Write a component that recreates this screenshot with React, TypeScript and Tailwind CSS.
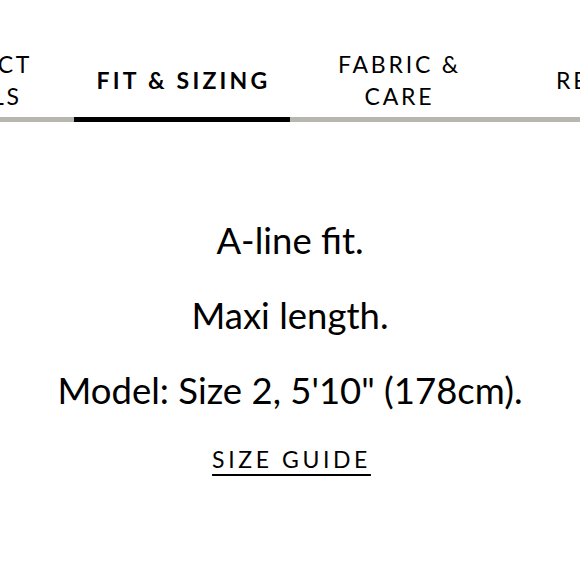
const tabs = [
  { label: 'PRODUCT DETAILS', lines: ['PRODUCT', 'DETAILS'] },
  { label: 'FIT & SIZING', lines: ['FIT & SIZING'], active: true },
  { label: 'FABRIC & CARE', lines: ['FABRIC &', 'CARE'] },
  { label: 'REVIEWS', lines: ['REVIEWS'] },
];

const details = ['A-line fit.', 'Maxi length.', 'Model: Size 2, 5\'10" (178cm).'];

export default function App() {
  return (
    <div
      className="w-[580px] h-[580px] overflow-hidden bg-white text-black"
      style={{ fontFamily: 'Lato, "Open Sans", sans-serif' }}
    >
      {/* tabs */}
      <div className="relative ml-[-142px] w-max">
        <div className="flex">
          {tabs.map((tab) => (
            <div
              key={tab.label}
              className="relative w-[216px] h-[117px] shrink-0 flex flex-col items-center justify-center pt-[43px]"
            >
              {tab.lines.map((line) => (
                <span
                  key={line}
                  className={
                    tab.active
                      ? 'text-[23px] leading-[32px] font-bold tracking-[3.2px] pl-[3px]'
                      : 'text-[23px] leading-[32px] tracking-[2.8px] pl-[3px]'
                  }
                >
                  {line}
                </span>
              ))}
              {tab.active && <div className="absolute left-0 right-0 bottom-[-5px] h-[5px] bg-black z-10" />}
            </div>
          ))}
        </div>
        <div className="h-[5px] bg-[#b7b7b0]" />
      </div>

      {/* content */}
      <div className="flex flex-col items-center pt-[81px]">
        {details.map((d) => (
          <p key={d} className="text-[36.5px] leading-[75px]">
            {d}
          </p>
        ))}
        <a className="mt-[15px] pl-[3px] text-[23px] leading-[32px] tracking-[3.6px] underline underline-offset-[6px] decoration-[2px]">
          SIZE GUIDE
        </a>
      </div>
    </div>
  );
}
